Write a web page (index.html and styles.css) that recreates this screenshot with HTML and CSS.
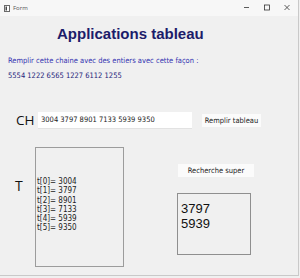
FILE: index.html
```html
<!DOCTYPE html>
<html lang="fr">
<head>
<meta charset="utf-8">
<title>Form</title>
<link rel="stylesheet" href="styles.css">
</head>
<body>
<div class="window">
  <div class="titlebar">
    <svg class="app-icon" width="6" height="7" viewBox="0 0 6 7"><rect x="0.5" y="0.5" width="5" height="6" fill="#fff" stroke="#6a6a6a"/><rect x="1.5" y="1.5" width="1.5" height="4" fill="#4a4a4a"/></svg>
    <span class="tb-title">Form</span>
    <div class="controls">
      <svg class="ctl" width="20" height="16" viewBox="0 0 20 16"><line x1="7" y1="7.5" x2="12" y2="7.5" stroke="#333" stroke-width="0.8"/></svg>
      <svg class="ctl" width="20" height="16" viewBox="0 0 20 16"><rect x="7.5" y="5" width="5" height="5" fill="none" stroke="#333" stroke-width="0.8"/></svg>
      <svg class="ctl" width="20" height="16" viewBox="0 0 20 16"><path d="M7.5 5 L12.5 10 M12.5 5 L7.5 10" stroke="#333" stroke-width="0.8"/></svg>
    </div>
  </div>
  <div class="client">
    <h1 class="heading">Applications tableau</h1>
    <p class="hint">Remplir cette chaine avec des entiers avec cette façon :</p>
    <p class="example">5554 1222 6565 1227 6112 1255</p>
    <div class="row-ch">
      <span class="label-ch">CH</span>
      <div class="input">3004 3797 8901 7133 5939 9350</div>
      <button class="btn btn-fill">Remplir tableau</button>
    </div>
    <div class="row-t">
      <span class="label-t">T</span>
      <div class="listbox">
        <div class="line">t[0]= 3004</div>
        <div class="line">t[1]= 3797</div>
        <div class="line">t[2]= 8901</div>
        <div class="line">t[3]= 7133</div>
        <div class="line">t[4]= 5939</div>
        <div class="line">t[5]= 9350</div>
      </div>
      <div class="side">
        <button class="btn btn-search">Recherche super</button>
        <div class="result">
          <div class="res-line">3797</div>
          <div class="res-line">5939</div>
        </div>
      </div>
    </div>
  </div>
</div>
</body>
</html>
```

FILE: styles.css
```css
html, body {
  margin: 0;
  padding: 0;
  background: #f0f0f0;
}
.window {
  width: 298px;
  height: 275px;
  background: #f0f0f0;
  border-right: 1px solid #c9c9c9;
  border-bottom: 1px solid #c9c9c9;
  overflow: hidden;
  font-family: "DejaVu Sans Condensed", "DejaVu Sans", sans-serif;
}
.titlebar {
  height: 16px;
  background: #f7f7f7;
  display: flex;
  align-items: center;
  padding-left: 4px;
}
.app-icon {
  display: block;
}
.tb-title {
  margin-left: 3px;
  font-family: "Open Sans", sans-serif;
  font-size: 6px;
  color: #555;
}
.controls {
  margin-left: auto;
  display: flex;
  margin-right: 1px;
}
.ctl {
  display: block;
}
.client {
  display: flex;
  flex-direction: column;
}
.heading {
  margin: 9px 0 0 57px;
  font-family: "Liberation Sans", Arial, sans-serif;
  font-size: 15px;
  line-height: 18px;
  font-weight: bold;
  color: #1c1c6a;
}
.hint, .example {
  margin: 0 0 0 8px;
  font-size: 7.5px;
  line-height: 10px;
}
.hint {
  margin-top: 13px;
  color: #3333b0;
}
.example {
  margin-top: 5px;
  color: #23237a;
}
.row-ch {
  display: flex;
  align-items: center;
  margin-top: 31px;
  height: 17px;
}
.label-ch {
  margin-left: 16px;
  width: 22px;
  font-family: "Open Sans", sans-serif;
  font-size: 13.5px;
  line-height: 16px;
  margin-top: -2px;
  color: #111;
}
.input {
  width: 151px;
  height: 16px;
  background: #fff;
  padding-left: 3px;
  font-size: 7.5px;
  line-height: 16px;
  color: #222;
  border-bottom: 1px solid #e2e2e2;
}
.btn {
  border: none;
  padding: 0;
  background: #fbfbfb;
  font-family: "DejaVu Sans Condensed", "DejaVu Sans", sans-serif;
  font-size: 7.5px;
  color: #222;
  height: 13px;
}
.btn-fill {
  margin-left: 10px;
  width: 59px;
}
.row-t {
  display: flex;
  margin-top: 18px;
}
.label-t {
  margin: 31px 0 0 15px;
  width: 20px;
  font-family: "Open Sans", sans-serif;
  font-size: 14px;
  line-height: 16px;
  color: #111;
}
.listbox {
  box-sizing: border-box;
  width: 89px;
  height: 120px;
  border: 1px solid #9c9c9c;
  padding: 29px 0 0 1px;
  font-size: 8px;
  line-height: 9.3px;
  color: #222;
}
.side {
  margin-left: 53px;
  display: flex;
  flex-direction: column;
  padding-top: 17px;
}
.btn-search {
  margin-left: 1px;
  width: 76px;
}
.result {
  box-sizing: border-box;
  margin-top: 16px;
  width: 74px;
  height: 62px;
  border: 1px solid #8f8f8f;
  padding: 7px 0 0 3px;
  font-family: "Liberation Sans", Arial, sans-serif;
  font-size: 13px;
  line-height: 15px;
  color: #111;
}
.res-line {
  height: 15px;
}
```
